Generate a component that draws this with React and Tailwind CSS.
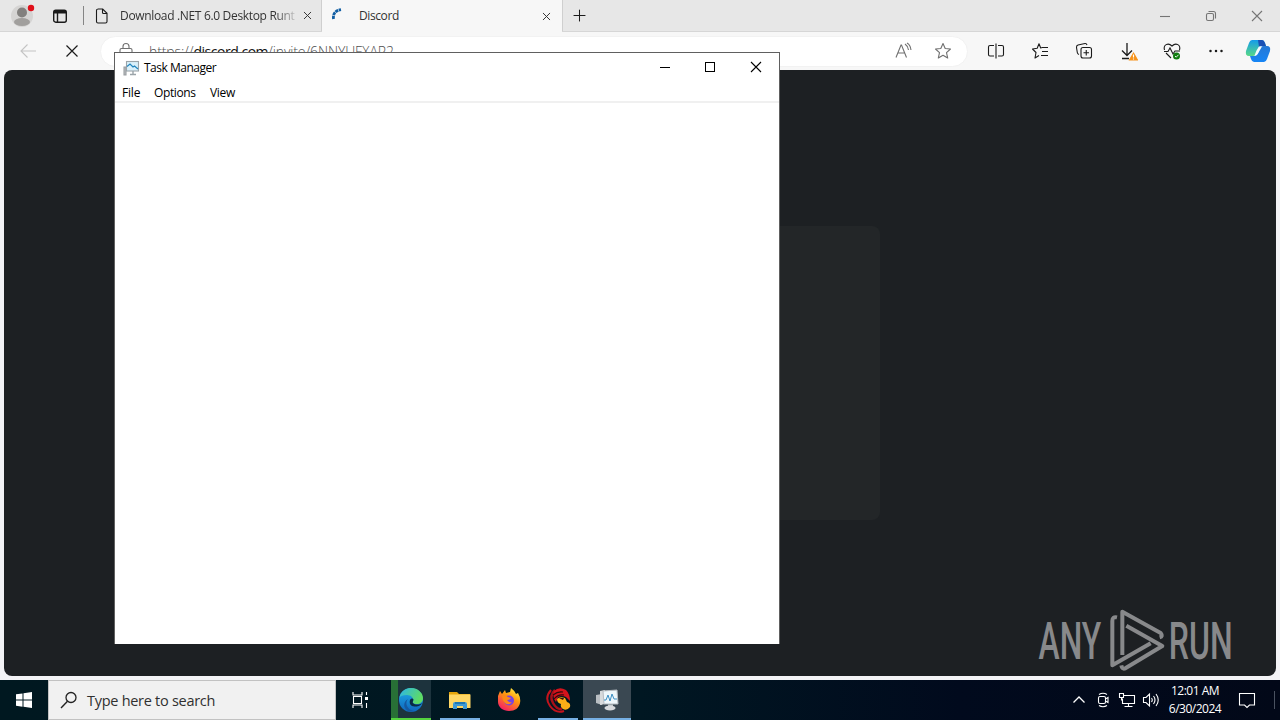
import React from 'react';
import { X, Plus } from 'lucide-react';

const Icon = ({ size = 18, children, className = '', ...rest }) => (
    <svg width={size} height={size} viewBox={`0 0 ${size} ${size}`} fill="none" stroke="currentColor" strokeWidth="1.1" className={`shrink-0 ${className}`} {...rest}>
        {children}
    </svg>
);

const MonitorIcon = () => (
    <Icon size={18}>
        <path d="M2 8h2v8h-2z" fill="#b9bdc0" stroke="#9a9ea1" />
        <rect x="4.5" y="2.5" width="12" height="9.5" fill="#d9f0fa" stroke="#9ba4a9" />
        <path d="M5 7.500L8 5l3 3 1.500-1L16 10" stroke="#2485bd" strokeWidth="1.2" />
        <path d="M11 12v3M8 15.5h6" stroke="#9ba4a9" strokeWidth="1.4" />
    </Icon>
);

const TabStrip = () => (
    <div className="h-8 flex bg-[#e7e7e7] text-[#1b1b1b] border-b border-[#d6d6d6]">
        <div className="w-11 flex items-center justify-center">
            <svg width="26" height="26" viewBox="0 0 26 26">
                <circle cx="13" cy="13" r="11" fill="#d5d4d3" />
                <circle cx="13" cy="9.5" r="5" fill="#82807e" />
                <ellipse cx="13" cy="19" rx="8" ry="4" fill="#a19f9d" />
                <circle cx="22" cy="5" r="3.2" fill="#e0101a" />
            </svg>
        </div>
        <div className="w-8 flex items-center justify-center">
            <Icon size={16} strokeWidth="1.4">
                <rect x="1.7" y="2.2" width="12.6" height="12" rx="2" />
                <path d="M2 4h12" strokeWidth="3" />
                <path d="M5.5 4v10" />
            </Icon>
        </div>
        <div className="w-2 my-1.5 border-r border-[#858585]" />
        <div className="w-[238px] flex items-center border-r border-[#cfcfcf] pl-[10px]">
            <Icon size={16}>
                <path d="M3.500 1h5.200L13 5.300V13.500Q13 15 11.500 15H4Q2.500 15 2.500 13.500V2.500Q2.500 1 4 1M8.500 1v3.500q0 1 1 1H13" />
            </Icon>
            <div className="ml-2.5 w-[176px] whitespace-nowrap font-['Open_Sans'] text-[12px] tracking-[-0.33px] text-[#333] [mask-image:linear-gradient(to_right,black_88%,transparent_102%)]">
                Download .NET 6.0 Desktop Runt
            </div>
            <X size={13} strokeWidth={1.8} className="ml-[5px] text-[#333]" />
        </div>
        <div className="w-[240px] h-8 flex items-center bg-[#f7f7f7] pl-2">
            <Icon size={16} stroke="#115ea3" strokeWidth="2.8" strokeDasharray="3.2 0.6">
                <path d="M3.500 11Q2.500 3 11 1.600" />
            </Icon>
            <span className="ml-[13px] font-['Open_Sans'] text-[12px] tracking-[-0.4px] text-[#333] flex-1">Discord</span>
            <X size={13} strokeWidth={1.8} className="mr-[9px] text-[#333]" />
        </div>
        <div className="w-[34px] flex items-center justify-center border-l border-[#cfcfcf]">
            <Plus size={19} strokeWidth={1.3} />
        </div>
        <div className="flex-1" />
        <div className="flex items-center text-[#757575]">
            <div className="w-[46px] flex justify-center"><Icon size={12}><path d="M1 6.500h10" /></Icon></div>
            <div className="w-[46px] flex justify-center">
                <Icon size={12}>
                    <rect x="1.500" y="3.500" width="7" height="7" rx="1.500" />
                    <path d="M3.500 1.500h5q2 0 2 2v5" />
                </Icon>
            </div>
            <div className="w-[46px] flex justify-center"><Icon size={12}><path d="M1 1l10 10M11 1L1 11" /></Icon></div>
        </div>
    </div>
);

const Slot = ({ children }) => <div className="w-11 flex items-center justify-center">{children}</div>;

const Toolbar = () => (
    <div className="h-[38px] flex items-center bg-[#f7f7f7] text-[#1b1b1b]">
        <div className="w-[50px] pl-1.5 flex justify-center text-[#c4c4c4]">
            <Icon><path d="M17 9H2M8.500 2.500L2 9l6.500 6.500" /></Icon>
        </div>
        <div className="w-[50px] pr-1.5 flex justify-center">
            <Icon size={16} strokeWidth="1.200"><path d="M2.500 2.500l11 11M13.500 2.500l-11 11" /></Icon>
        </div>
        <div className="w-[868px] h-[31px] rounded-full bg-white flex items-center border border-[#f2f2f2] pl-4 text-[#707070]">
            <Icon>
                <rect x="3" y="6.500" width="12" height="9.500" rx="1.500" />
                <path d="M6 6.500V4.500a3 3 0 0 1 6 0v2" />
            </Icon>
            <span className="ml-[14px] flex-1 font-['Open_Sans'] font-light text-[14px] tracking-[-0.12px] whitespace-nowrap text-[#505050] pt-px">
                https://<span className="font-normal text-[#111] tracking-[-0.48px]">discord.com</span>/invite/6NNYUFXAR2
            </span>
            <Icon>
                <path d="M2 15.500L7 3h.500l5 12.500M4 11h7M11 2q3 2 3.500 6M13 1q3.500 2 4 7" />
            </Icon>
            <Icon className="ml-[22px] mr-[15px]" strokeLinejoin="round">
                <path d="M9 1.500l2.200 5 5.300.500-4 3.600 1.200 5.400L9 13.200 4.300 16l1.200-5.400-4-3.600 5.300-.500z" />
            </Icon>
        </div>
        <div className="flex ml-1.5">
            <Slot>
                <Icon><path d="M7 3.500H3Q1.500 3.500 1.500 5v7.500Q1.500 14 3 14h4M11 3.500h4q1.500 0 1.500 1.500v7.500q0 1.500-1.500 1.500h-4M9 1.500v15" /></Icon>
            </Slot>
            <Slot>
                <Icon strokeLinejoin="round"><path d="M10.500 6H9.700L8 1.800 6.200 6.200 1.500 7l3.500 3.500-1 5.500 4-2.500M10.500 5.500H17M11 9.500h6M10 13.500h7" /></Icon>
            </Slot>
            <Slot>
                <Icon>
                    <rect x="6" y="5.500" width="10.500" height="10.500" rx="2" />
                    <path d="M11.250 8v5.500M8.500 10.750H14M4 12.500Q2.500 12 2.300 10.500L1.500 5.500Q1.300 3.500 3 3l7-1.500q1.500-.2 2 1.500" />
                </Icon>
            </Slot>
            <Slot>
                <Icon size={20}>
                    <path d="M9 2v12M4 9.500l5 5 5-5M4 17.500h7" strokeWidth="1.3" />
                    <path d="M15.500 12L19.500 19h-8z" fill="#f7941d" stroke="#f7941d" />
                    <path d="M15.500 13.500v3M15.500 17.500v1" stroke="#fff" />
                </Icon>
            </Slot>
            <Slot>
                <Icon size={20}>
                    <path d="M2.500 9C1 4 6 1 10 5c4-4 9-1 7.500 4M2 10.500h4l2-3.500 3 6 2-3h5M4 12l5 5" />
                    <circle cx="14.500" cy="15" r="3.500" fill="#107c10" stroke="none" />
                    <path d="M13 15l1.200 1.200 2.300-2.400" stroke="#fff" strokeWidth=".9" />
                </Icon>
            </Slot>
            <Slot>
                <Icon stroke="none" fill="currentColor"><circle cx="3.500" cy="9" r="1.250" /><circle cx="9" cy="9" r="1.250" /><circle cx="14.500" cy="9" r="1.250" /></Icon>
            </Slot>
            <div className="w-10 flex justify-center">
                <svg width="26" height="24" viewBox="0 0 26 24">
                    <defs>
                        <linearGradient id="cpA" x2="0" y2="1"><stop stopColor="#149bea" /><stop offset="1" stopColor="#58d887" /></linearGradient>
                        <linearGradient id="cpB" x2="0" y2="1"><stop stopColor="#2678d5" /><stop offset="1" stopColor="#1685f5" /></linearGradient>
                    </defs>
                    <path d="M7 1h10q2 0 3 3l1 3h-4q-3 0-4 3l-2 5q-1 2-3 2H4q-4 0-3-5L4 4q1-3 3-3z" fill="url(#cpA)" />
                    <path d="M13 1h4q2 0 3 3l1 3h-4q-2 0-3 1z" fill="#1b50b5" />
                    <path d="M19 23H9q-2 0-3-3l-1-3h4q3 0 4-3l2-5q1-2 3-2h4q4 0 3 5l-3 8q-1 3-3 3z" fill="url(#cpB)" />
                    <path d="M14 7.500h3l-4 7q-1 2-3 2h-.500l2-5z" fill="#f4fbff" />
                </svg>
            </div>
        </div>
    </div>
);

const AnyRunLogo = () => (
    <svg width="194" height="64" viewBox="0 0 194 64" fill="#88898b" className="absolute left-[1034px] top-[538px]">
        <g fontFamily="Roboto" fontSize="51" fontWeight="500" transform="scale(.62 1)">
            <text x="1" y="51" textLength="101" lengthAdjust="spacingAndGlyphs">ANY</text>
            <text x="211" y="51" textLength="103" lengthAdjust="spacingAndGlyphs">RUN</text>
        </g>
        <g transform="translate(62 -3) scale(.3333)" fill="none" stroke="#88898b" strokeWidth="12" strokeLinejoin="round">
            <path d="M51 37Q37 34 37 48V181L152 115" />
            <path d="M67 150V20L182 84Q190 94 179 97" />
            <path d="M79 62L187 123 76 190Q66 194 64 181" />
        </g>
    </svg>
);

const TaskManager = () => (
    <div className="absolute left-[114px] top-[52px] w-[666px] h-[592px] bg-white border-t border-x border-[#606060] border-b-0 text-black font-['Open_Sans'] text-[12px]">
        <div className="h-[30px] flex items-center">
            <div className="ml-[7px]"><MonitorIcon /></div>
            <span className="ml-1 flex-1 tracking-[-0.5px]">Task Manager</span>
            <div className="w-[45px] flex justify-center pb-0.5"><Icon size={12}><path d="M1 6.500h10" strokeWidth="1" /></Icon></div>
            <div className="w-[45px] flex justify-center pb-0.5"><Icon size={12}><rect x="1.500" y="1.500" width="9" height="9" strokeWidth="1" /></Icon></div>
            <div className="w-[47px] flex justify-center pb-0.5"><Icon size={12}><path d="M1 1l10 10M11 1L1 11" /></Icon></div>
        </div>
        <div className="h-5 flex items-center pt-0.5 pl-[7px] gap-[14px] border-b-2 border-[#f0f0f0]">
            <span className="w-[18px] tracking-[-0.2px]">File</span>
            <span className="w-[42px] tracking-[-0.4px]">Options</span>
            <span className="tracking-[-0.3px]">View</span>
        </div>
    </div>
);

const EdgeIcon = () => (
    <svg width="26" height="26" viewBox="0 0 26 26">
        <defs>
            <linearGradient id="edG" x2="1" y2=".4"><stop stopColor="#2bb4ed" /><stop offset="1" stopColor="#5fdc62" /></linearGradient>
            <linearGradient id="edB" x2="0" y2="1"><stop stopColor="#1faee8" /><stop offset="1" stopColor="#0f66bd" /></linearGradient>
        </defs>
        <circle cx="13" cy="13" r="12" fill="url(#edB)" />
        <path d="M1.200 11C3 3 9 1 13 1c7 0 12 5 12 10 0 4-3 6-6 6-4 0-5-1-4-3 1-3-2-6-6-6-4 0-7 1-7.800 3z" fill="url(#edG)" />
        <path d="M12 13c1-2 3-2 3.500-.500 0 1.500-1.500 2.500-.500 3.500 2 2 6 2 9.500 0-2 3-5 3.500-8 3.500-4 0-5.500-3.500-4.500-6.500z" fill="#0a2a45" />
        <path d="M10 12c-4 5 0 11 6 12-8 3-14-7-6-12z" fill="#1559a0" />
    </svg>
);

const FolderIcon = () => (
    <svg width="24" height="24" viewBox="0 0 24 24">
        <path d="M1 4h8l2 2h11v5H1z" fill="#e5a50a" />
        <path d="M1 6.500h21.500V20H1z" fill="#ffd765" />
        <path d="M5 21v-5q0-2 2-2h10q2 0 2 2v5h-4v-3H9v3z" fill="#3f9ad6" />
        <path d="M7 14h10v2H7z" fill="#1f78b4" />
    </svg>
);

const FirefoxIcon = () => (
    <svg width="26" height="26" viewBox="0 0 26 26">
        <defs>
            <linearGradient id="ffG" x1=".8" y1="0" x2=".2" y2="1"><stop stopColor="#fff044" /><stop offset=".4" stopColor="#ff980e" /><stop offset="1" stopColor="#f5156c" /></linearGradient>
        </defs>
        <path d="M2 9l2-5 2 3 3-4 1 3 4-1 1-4q4 3 5 6l2-1q3 5 2 10c-1 5-5 8-11 8S2 20 2 15z" fill="url(#ffG)" />
        <circle cx="13" cy="13.500" r="5" fill="#7542e5" />
        <path d="M6 9q3-2 6 1l3 1q-1 2-4 2 2 3 5 2-3 4-7 1-3-3-3-7z" fill="#ff8a16" />
    </svg>
);

const RedBirdIcon = () => (
    <svg width="26" height="26" viewBox="0 0 26 26">
        <path d="M6 3Q-1 11 5 19t14 5" fill="none" stroke="#c3131c" strokeWidth="2" />
        <path d="M10 3Q4 9 8 16t9 6" fill="none" stroke="#a81018" strokeWidth="2.500" />
        <path d="M9 4q5-5 12-1 4 4 4 11l-4-4q-4-2-8 0l-2 5q-4-5-2-11z" fill="#d3131c" />
        <path d="M8 8q5-4 10-3M9 12q4-5 10-4" stroke="#300a0c" strokeWidth="1.200" fill="none" />
        <path d="M12 12q3-3 8-1l2 4q4 1 3 5-3 4-7 2-3-2-2-5-4-1-4-5z" fill="#fbae17" />
        <path d="M14 11l4 2 1-2z" fill="#3a1208" />
    </svg>
);

const PerfIcon = () => (
    <svg width="26" height="26" viewBox="0 0 26 26">
        <path d="M2 8l6-1v11l-6-2z" fill="#b9bec2" />
        <path d="M6 4l5-1v14l-5 1z" fill="#d7dadc" />
        <path d="M9 4l14-1 1 14H10z" fill="#eef7fb" stroke="#b7bdc2" />
        <path d="M10 13h2l2-5 2 6 2-7 2 5h3" fill="none" stroke="#3b8fc4" />
        <path d="M14 17.500h5v3h-5z" fill="#bfc4c8" />
        <ellipse cx="16" cy="21" rx="5.500" ry="2.500" fill="#d6d9dc" />
    </svg>
);

const apps = [
    { id: 'edge', icon: <EdgeIcon />, box: 'w-10 ml-[7px] border-[#55d43f] bg-[linear-gradient(to_right,#287036_7px,#1d333d_7px)]' },
    { id: 'explorer', icon: <FolderIcon />, box: 'w-10 ml-[9px] border-[#76b0e4]' },
    { id: 'firefox', icon: <FirefoxIcon />, box: 'w-10 ml-[9px] border-transparent' },
    { id: 'bird', icon: <RedBirdIcon />, box: 'w-10 ml-[9px] border-[#76b0e4]' },
    { id: 'taskmgr', icon: <PerfIcon />, box: 'w-12 ml-[5px] border-[#76b0e4] bg-[#3a4852]' },
];

const Taskbar = () => (
    <div className="h-10 flex bg-[linear-gradient(to_right,#001820,#001722_50%,#010a1d_75%,#020818)] text-white">
        <div className="w-12 flex items-center justify-center">
            <Icon size={16} fill="currentColor" stroke="none">
                <path d="M0 2.300L6.500 1.400V7.600H0zM7.500 1.200L16 0v7.600H7.500zM0 8.500h6.500v6.200L0 13.800zM7.500 8.500H16V16l-8.500-1.200z" />
            </Icon>
        </div>
        <div className="w-72 flex items-center bg-[#f1f1f1] border border-[#c2c2c2] text-[#222] pl-[11px]">
            <Icon><circle cx="11" cy="6.500" r="5" strokeWidth="1.300" /><path d="M7.500 10.200L1 17" strokeWidth="1.400" /></Icon>
            <span className="ml-[9px] pt-0.5 font-['Open_Sans'] text-[14.500px] tracking-[-0.28px] text-[#303030]">Type here to search</span>
        </div>
        <div className="w-12 flex items-center justify-center">
            <Icon><path d="M2 1v3h9V1M2 17v-3h9v3M2.500 5.500h8v7h-8zM15.500 1v3M15.500 12v5" /><path d="M14 6h3v3h-3z" fill="currentColor" stroke="none" /></Icon>
        </div>
        {apps.map(app => (
            <div key={app.id} className={`flex items-center justify-center border-b-2 pt-0.5 ${app.box}`}>
                {app.icon}
            </div>
        ))}
        <div className="flex-1" />
        <div className="flex items-center">
            <div className="w-6 flex justify-center"><Icon size={14}><path d="M1.500 9.500L7 4l5.500 5.500" strokeWidth="1.300" /></Icon></div>
            <div className="w-6 flex justify-center">
                <Icon size={16}><rect x="3.500" y="4.500" width="7" height="7" rx="1.500" /><path d="M10.500 7l2.500-1.500v5L10.500 9M4 2.500q4-2.500 8 0M4 13.500q4 2.500 8 0" /></Icon>
            </div>
            <div className="w-6 flex justify-center">
                <Icon><path d="M6 4.500h10.500v8h-12v-5M10.500 12.500v3M6.500 15.500h8M1.500 2.500h4v4h-4zM3.500 6.500v3" /></Icon>
            </div>
            <div className="w-6 flex justify-center">
                <Icon><path d="M1.500 6.500H4L7.500 3v12L4 11.500H1.500zM9.500 7q1.500 2 0 4M11.500 5q3 4 0 8M14 3q4.500 6 0 12" /></Icon>
            </div>
            <div className="w-16 text-center font-['Open_Sans'] text-[12px] leading-[18px] tracking-[-0.5px] whitespace-nowrap">
                <div>12:01 AM</div>
                <div>6/30/2024</div>
            </div>
            <div className="w-12 flex justify-center border-r border-[#4a5260]">
                <Icon className="mr-[7px]"><path d="M1.500 2.500h15v11.500h-5L9 16.500 6.500 14h-5z" /></Icon>
            </div>
            <div className="w-[5px]" />
        </div>
    </div>
);

export default function App() {
    return (
        <div className="relative w-[1280px] h-[720px] overflow-hidden flex flex-col bg-[#f3f3f6]">
            <TabStrip />
            <Toolbar />
            <div className="relative flex-1 mx-1 mb-1 rounded-lg bg-[#1d2023] flex items-center justify-center">
                <div className="w-[480px] h-[294px] rounded-lg bg-[#232628]" />
                <AnyRunLogo />
            </div>
            <Taskbar />
            <TaskManager />
        </div>
    );
}
